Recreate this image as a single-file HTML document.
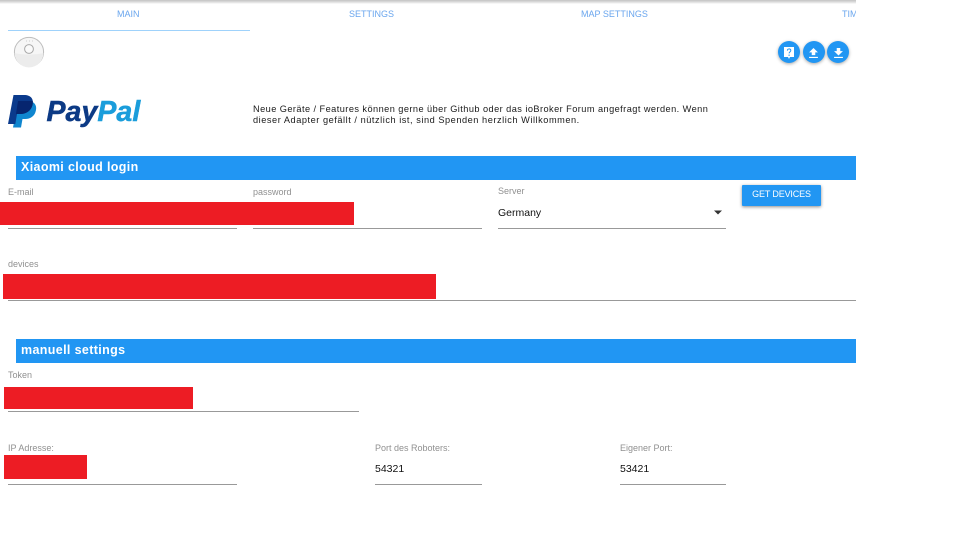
<!DOCTYPE html>
<html lang="de">
<head>
<meta charset="utf-8">
<title>Settings</title>
<style>
html,body{margin:0;padding:0;background:#fff;}
#page{position:relative;width:960px;height:540px;overflow:hidden;background:#fff;font-family:"Liberation Sans",sans-serif;}
#clip{position:absolute;left:0;top:0;width:856px;height:540px;overflow:hidden;}
#clip div,#clip span{position:absolute;white-space:nowrap;}
.shadow{left:0;top:0;width:856px;height:4px;background:linear-gradient(#c2c2c2,#dcdcdc 50%,#fff);}
.tab{top:9px;font-size:9px;line-height:11px;letter-spacing:0;color:#6aa6ee;}
.bar{left:16px;width:840px;height:24px;background:#2196f3;color:#fff;font-size:12.5px;font-weight:bold;line-height:22px;letter-spacing:.36px;text-indent:5px;}
.label{font-size:9px;line-height:11px;color:#909090;}
.val{font-size:10.5px;line-height:13px;color:#111;}
.line{height:1px;background:#999;}
.red{background:#ed1c24;}
.fab{width:22px;height:22px;border-radius:50%;background:#2196f3;top:41px;box-shadow:0 1px 3px rgba(0,0,0,.35);}
.note{left:253px;font-size:9.2px;line-height:11px;color:#1a1a1a;}
.btn{left:742px;top:185px;width:79px;height:21px;background:#2196f3;border-radius:1px;box-shadow:0 1px 3px rgba(0,0,0,.45);color:#fff;font-size:9px;line-height:19px;text-align:center;letter-spacing:-.15px;}
svg{position:absolute;display:block;}
</style>
</head>
<body>
<div id="page">
<div id="clip">
  <div class="shadow"></div>

  <span class="tab" style="left:117px">MAIN</span>
  <span class="tab" style="left:349px">SETTINGS</span>
  <span class="tab" style="left:581px">MAP SETTINGS</span>
  <span class="tab" style="left:842px">TIMER</span>
  <div style="left:8px;top:30px;width:242px;height:1px;background:#9fd2fb"></div>

  <svg style="left:12px;top:35px" width="34" height="34" viewBox="0 0 34 34">
    <circle cx="17" cy="17" r="14.6" fill="#f6f6f6" stroke="#bdbdbd" stroke-width="1"/>
    <path d="M2.6 18A14.4 14.4 0 0 0 31.4 18C25 20 9 20 2.6 18Z" fill="#ececec"/>
    <circle cx="17" cy="14" r="4.4" fill="#fafafa" stroke="#a8a8a8" stroke-width="1"/>
    <path d="M14 6h1M17 6h1M20 6h1" stroke="#cdcdcd" stroke-width="1"/>
  </svg>

  <div class="fab" style="left:778px">
    <svg style="left:6px;top:5.5px" width="10" height="12" viewBox="0 0 10 12">
      <path d="M0 0H10V10H6L5 12L4 10H0Z" fill="#fff"/>
      <path d="M3.4 3.6C3.4 1.4 6.8 1.4 6.8 3.5C6.8 4.9 5.1 4.9 5.1 6.4" fill="none" stroke="#2196f3" stroke-width="1"/>
      <path d="M4.5 7.6H5.7V8.8H4.5Z" fill="#2196f3"/>
    </svg>
  </div>
  <div class="fab" style="left:802.5px">
    <svg style="left:6.5px;top:6.5px" width="9" height="10" viewBox="0 0 10 11.3">
      <path d="M5 0L10 5H7V8H3V5H0Z" fill="#fff"/><path d="M0 10H10V11.3H0Z" fill="#fff"/>
    </svg>
  </div>
  <div class="fab" style="left:827px">
    <svg style="left:6.5px;top:6.5px" width="9" height="10" viewBox="0 0 10 11.3">
      <path d="M3 0H7V3.5H10L5 8.5L0 3.5H3Z" fill="#fff"/><path d="M0 10H10V11.3H0Z" fill="#fff"/>
    </svg>
  </div>

  <svg style="left:8px;top:95px" width="29" height="33" viewBox="0 0 29 33">
    <path d="M10 6H20C26 6 29 10 28 15C27 21 22.5 24 17 24H14.5L13 32.5H5Z" fill="#0f86cf"/>
    <path d="M5.5 0H16C23 0 26 4 24.5 10C23 16 18 19 12 19H9L7.3 29H0Z" fill="#0a3a8c"/>
    <path d="M10 6H24.8C24.8 7.5 24.8 8.8 24.5 10C23 16 18 19 12 19H8Z" fill="#06256f"/>
  </svg>
  <span style="left:46.5px;top:95px;font-size:28.5px;line-height:34px;font-weight:bold;font-style:italic;letter-spacing:.05px;color:#0c3a85;-webkit-text-stroke:.5px #0c3a85">Pay<span style="position:static;color:#1a9ddb;-webkit-text-stroke:.5px #1a9ddb">Pal</span></span>

  <div class="note" style="top:104px;letter-spacing:.45px">Neue Geräte / Features können gerne über Github oder das ioBroker Forum angefragt werden. Wenn</div>
  <div class="note" style="top:115px;letter-spacing:.545px">dieser Adapter gefällt / nützlich ist, sind Spenden herzlich Willkommen.</div>

  <div class="bar" style="top:156px">Xiaomi cloud login</div>

  <span class="label" style="left:8px;top:187px">E-mail</span>
  <span class="label" style="left:253px;top:187px">password</span>
  <span class="label" style="left:498px;top:186px">Server</span>
  <span class="val" style="left:498px;top:207px">Germany</span>
  <svg style="left:714px;top:210px" width="8" height="5" viewBox="0 0 8 5"><path d="M0 0.5H8L4 4.5Z" fill="#333"/></svg>
  <div class="line" style="left:8px;top:228px;width:229px"></div>
  <div class="line" style="left:253px;top:228px;width:229px"></div>
  <div class="line" style="left:498px;top:228px;width:228px"></div>
  <div class="red" style="left:0;top:202px;width:354px;height:23px"></div>
  <div class="btn">GET DEVICES</div>

  <span class="label" style="left:8px;top:259px">devices</span>
  <div class="red" style="left:3px;top:274px;width:433px;height:25px"></div>
  <div class="line" style="left:8px;top:300px;width:848px"></div>

  <div class="bar" style="top:339px">manuell settings</div>

  <span class="label" style="left:8px;top:370px">Token</span>
  <div class="red" style="left:4px;top:387px;width:189px;height:22px"></div>
  <div class="line" style="left:8px;top:411px;width:351px"></div>

  <span class="label" style="left:8px;top:443px">IP Adresse:</span>
  <div class="red" style="left:4px;top:455px;width:83px;height:24px"></div>
  <div class="line" style="left:8px;top:484px;width:229px"></div>

  <span class="label" style="left:375px;top:443px">Port des Roboters:</span>
  <span class="val" style="left:375px;top:463px">54321</span>
  <div class="line" style="left:375px;top:484px;width:107px"></div>

  <span class="label" style="left:620px;top:443px">Eigener Port:</span>
  <span class="val" style="left:620px;top:463px">53421</span>
  <div class="line" style="left:620px;top:484px;width:106px"></div>
</div>
</div>
</body>
</html>
